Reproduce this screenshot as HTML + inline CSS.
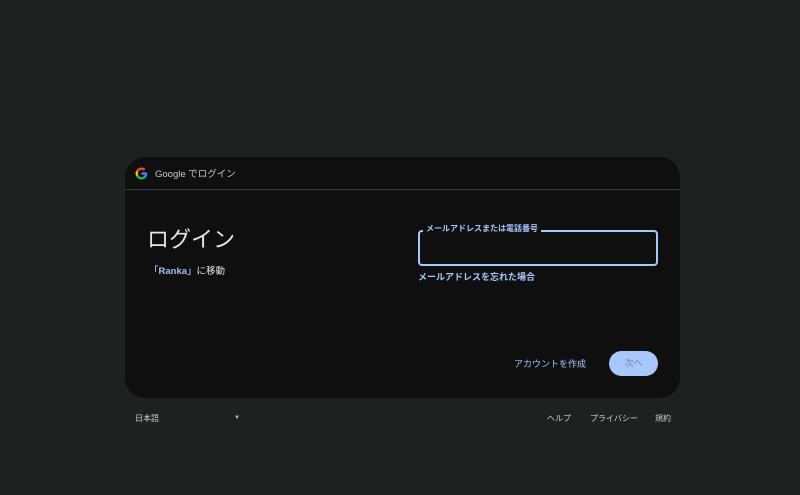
<!DOCTYPE html>
<html><head><meta charset="utf-8"><style>
body{margin:0;width:800px;height:495px;background:#1f2020;font-family:"Liberation Sans","Noto Sans CJK JP",sans-serif;position:relative;overflow:hidden}
.card{position:absolute;left:125px;top:157px;width:555px;height:241px;background:#0f0f0f;border-radius:20px}
.hdr{position:absolute;left:0;top:0;right:0;height:32px;border-bottom:1px solid #3a3a3a}
.a{position:absolute;white-space:nowrap}
</style></head><body>
<div class="card">
<div class="hdr"></div>
<svg class="a" style="left:10px;top:10px" width="13" height="13" viewBox="0 0 48 48"><path fill="#4285F4" d="M45 24.5c0-1.6-.1-3.1-.4-4.5H24v8.5h11.8c-.5 2.7-2.1 5-4.4 6.6v5.5h7.1c4.2-3.9 6.5-9.6 6.5-16.1z"/><path fill="#34A853" d="M24 46c5.9 0 10.9-2 14.5-5.3l-7.1-5.5c-2 1.3-4.5 2.1-7.4 2.1-5.7 0-10.5-3.8-12.2-9H4.5v5.7C8.1 41.1 15.5 46 24 46z"/><path fill="#FBBC05" d="M11.8 28.3c-.4-1.3-.7-2.8-.7-4.3s.3-3 .7-4.3V14H4.5C3 17 2 20.4 2 24s1 7 2.5 10z"/><path fill="#EA4335" d="M24 10.7c3.2 0 6.1 1.1 8.4 3.3l6.3-6.3C34.9 4.2 29.9 2 24 2 15.5 2 8.1 6.9 4.5 14l7.3 5.7c1.7-5.2 6.5-9 12.2-9z"/></svg>
<div class="a" style="left:30px;top:9px;font-size:9.5px;color:#c8c8c8">Google でログイン</div>
<div class="a" style="left:22px;top:65px;font-size:22px;color:#e6e6e6">ログイン</div>
<div class="a" style="left:24px;top:106px;font-size:9.5px;color:#e6e6e6">「<span style="color:#9fc1f5;font-weight:bold">Ranka</span>」に移動</div>
<div class="a" style="left:293px;top:73px;width:236px;height:32px;border:2px solid #a8c7fa;border-radius:4px"></div>
<div class="a" style="left:298px;top:66px;font-size:8px;color:#a8c7fa;background:#0f0f0f;padding:0 3px;font-weight:bold">メールアドレスまたは電話番号</div>
<div class="a" style="left:293px;top:113px;font-size:9px;color:#a8c7fa;font-weight:bold">メールアドレスを忘れた場合</div>
<div class="a" style="left:389px;top:200px;font-size:9px;color:#a8c7fa">アカウントを作成</div>
<div class="a" style="left:484px;top:194px;width:49px;height:25px;background:#a8c7fa;border-radius:13px;font-size:9px;color:#6e86a8;text-align:center;line-height:25px">次へ</div>
</div>
<div class="a" style="left:135px;top:413px;font-size:8px;color:#d0d0d0">日本語</div>
<div class="a" style="left:234px;top:415px;font-size:6px;color:#bbb">▼</div>
<div class="a" style="left:547px;top:413px;font-size:8px;color:#d0d0d0">ヘルプ</div>
<div class="a" style="left:590px;top:413px;font-size:8px;color:#d0d0d0">プライバシー</div>
<div class="a" style="left:655px;top:413px;font-size:8px;color:#d0d0d0">規約</div>
</body></html>
